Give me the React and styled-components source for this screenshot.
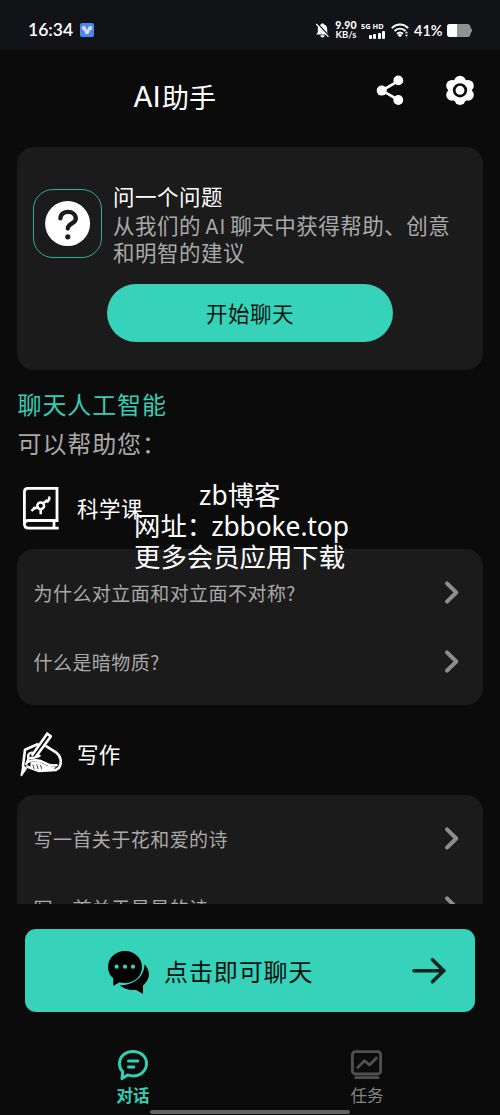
import React from "react";
import styled, { createGlobalStyle } from "styled-components";

const Global = createGlobalStyle`
  * { box-sizing: border-box; }
  body {
    margin: 0;
    background: #0b0b0b;
    color: #fff;
    font-family: "Noto Sans CJK SC", "Noto Sans", sans-serif;
    font-kerning: none;
    overflow: hidden;
  }
  svg { display: block; flex: none; }
`;

const Screen = styled.div`
  position: relative;
  width: 500px;
  height: 1115px;
  display: flex;
  flex-direction: column;
  background: #0b0b0b;
  overflow: hidden;
`;

const Text = styled.span`
  display: block;
  white-space: nowrap;
  font-size: ${(p) => p.$size}px;
  letter-spacing: ${(p) => p.$gap || 0}px;
  line-height: ${(p) => p.$line || 30}px;
  color: ${(p) => p.$color || "#fff"};
  font-weight: ${(p) => p.$weight || 400};
`;

const StatusBar = styled.div`
  height: 50px;
  flex: none;
  display: flex;
  align-items: center;
  padding: 10px 28px 0 28px;
  background: #121317;
`;

const Clock = styled.span`
  width: 45px;
  font: 600 17.5px/20px Lato, sans-serif;
  margin-right: 7px;
  white-space: nowrap;
`;

const StatusRight = styled.div`
  margin-left: auto;
  display: flex;
  align-items: center;
`;

const Speed = styled.div`
  width: 22px;
  margin: 0 4px 0 6px;
  font: 700 9.5px/9px Lato, sans-serif;
  text-align: center;
  white-space: nowrap;
  b { display: block; font-size: 10.5px; letter-spacing: 0.2px; }
`;

const Signal = styled.div`
  width: 24px;
  margin-right: 6px;
  font: 700 7.4px/8px "Noto Sans", sans-serif;
  white-space: nowrap;
`;

const Bars = styled.div`
  display: flex;
  align-items: flex-end;
  justify-content: flex-end;
  gap: 1.4px;
  height: 9px;
`;

const Bar = styled.i`
  width: 3px;
  height: ${(p) => p.$h}px;
  border-radius: 1px;
  background: #fff;
`;

const Percent = styled.span`
  width: 29px;
  margin: 1px 4px 0 5px;
  font: 600 14.5px/20px Lato, sans-serif;
  white-space: nowrap;
`;

const Header = styled.header`
  height: 97px;
  flex: none;
  display: flex;
  padding: 25px 25px 0 133px;
`;

const Title = styled.h1`
  flex: 1;
  display: flex;
  margin: 7px 0 0;
  font-size: 27px;
  line-height: 30px;
  font-weight: 400;
`;

const TitleLatin = styled.span`
  width: 29px;
  font-family: Inter, sans-serif;
  font-size: 29px;
  letter-spacing: -0.3px;
`;

const Actions = styled.div`
  display: flex;
  gap: 41px;
`;

const Content = styled.main`
  height: 757px;
  flex: none;
  overflow: hidden;
  padding: 0 17px 0 16.5px;
`;

const HeroCard = styled.section`
  height: 223px;
  border-radius: 17px;
  background: #1b1b1b;
  padding: 34px 16px 28px 16.5px;
  display: flex;
  flex-direction: column;
  justify-content: space-between;
`;

const HeroTop = styled.div`
  display: flex;
  gap: 11px;
`;

const IconBox = styled.div`
  width: 69px;
  height: 69px;
  margin-top: 8px;
  flex: none;
  display: grid;
  place-items: center;
  border: 1.4px solid #30ae99;
  border-radius: 20px;
`;

const Description = styled(Text)`
  margin-top: 1px;
`;

const Latin = styled.span`
  padding: 0 4px 0 4px;
  font-family: Inter, sans-serif;
  font-size: 20px;
  line-height: 1;
  letter-spacing: 1px;
`;

const StartButton = styled.button`
  width: 286px;
  height: 58px;
  padding: 0;
  margin-left: 74px;
  border: 0;
  border-radius: 29px;
  background: #36d2b9;
  font-family: inherit;
  display: grid;
  place-items: center;
`;

const Intro = styled.div`
  padding: 15px 0 0 1px;
  height: 108px;
`;

const SectionHead = styled.div`
  display: flex;
  align-items: center;
  gap: 15px;
  height: ${(p) => p.$height}px;
  padding: ${(p) => p.$top || 0}px 0 ${(p) => p.$bottom || 0}px 3.5px;
`;

const List = styled.div`
  border-radius: 17px;
  background: #1b1b1b;
  padding: 9px 22px 8px 17px;
`;

const Row = styled.div`
  height: 69.5px;
  display: flex;
  align-items: center;
  justify-content: space-between;
`;

const Cta = styled.button`
  width: 450px;
  height: 83px;
  flex: none;
  margin: 25px 25px 0;
  border: 0;
  border-radius: 11px;
  background: #36d2b9;
  padding: 0 28px 0 82px;
  display: flex;
  align-items: center;
  font-family: inherit;
`;

const CtaLabel = styled(Text)`
  flex: 1;
  text-align: left;
  padding-left: 14px;
`;

const Tabs = styled.nav`
  display: flex;
  padding: 37px 16px 0;
`;

const Tab = styled.div`
  flex: 1;
  display: flex;
  flex-direction: column;
  align-items: center;
`;

const HomeBar = styled.div`
  position: absolute;
  left: 150px;
  bottom: 1px;
  width: 200px;
  height: 4px;
  border-radius: 2px;
  background: #626262;
`;

const Watermark = styled.div`
  position: absolute;
  left: 134px;
  top: 480px;
  width: 216px;
  font: 400 26.4px/31px "Noto Sans", "Noto Sans CJK SC", sans-serif;
  text-align: left;
  white-space: nowrap;
  pointer-events: none;
`;

const WatermarkName = styled.div`
  padding-left: 65px;
`;

const Site = styled.span`
  margin-left: -2px;
  letter-spacing: -0.1px;
`;

const Chevron = () => (
  <svg width="18" height="26" viewBox="0 0 18 26" fill="none" stroke="#8e8e8e" strokeWidth="4" strokeLinecap="round" strokeLinejoin="round">
    <path d="M4 3.3 13.3 12.5 4 21.7" />
  </svg>
);

const AppBadge = () => (
  <svg width="14" height="14" viewBox="0 0 14 14">
    <rect width="14" height="14" rx="2" fill="#4c87ed" />
    <path d="M3.8 5.3 7 9 10.3 5.3" stroke="#cfd7ff" strokeWidth="3" fill="none" />
    <circle cx="3.9" cy="5" r="2.1" fill="#f0cbdc" />
    <circle cx="10.2" cy="5" r="2.1" fill="#c4e6c5" />
    <circle cx="7" cy="9" r="2.2" fill="#d9dcff" />
  </svg>
);

const BellOff = () => (
  <svg width="13" height="15" viewBox="0 0 13 15">
    <path d="M6.5 .2a1.2 1.2 0 0 1 1.2 1c2.2.6 3.5 2.4 3.5 4.7v3.4l1.4 2.2H.4l1.4-2.2V5.9c0-2.3 1.3-4.1 3.5-4.7a1.2 1.2 0 0 1 1.2-1zM4.4 12.2h4.2a2.1 2.2 0 0 1-4.2 0z" fill="#fff" />
    <path d="M1.2 .3 13.6 13.4" stroke="#121317" strokeWidth="1.4" />
    <path d="M.2 1 12.5 13.9" stroke="#fff" strokeWidth="1.2" />
  </svg>
);

const Wifi = () => (
  <svg width="18" height="15" viewBox="0 0 18 15" fill="none" stroke="#fff" strokeWidth="1.9">
    <path d="M.8 5.2c4.7-4.9 11.7-4.9 16.4 0M3.5 8c3.2-3.2 7.8-3.2 11 0M6 10.7c1.9-1.6 4.1-1.6 6 0" />
    <path d="M6.5 12Q9 10 11.2 12L9 14.3z" fill="#fff" stroke="none" />
    <path d="m15.5 8.3 1.5 2h-3zM15.5 13.7l1.5-2h-3z" fill="#fff" stroke="none" />
  </svg>
);

const Battery = () => (
  <svg width="25" height="13" viewBox="0 0 25 13">
    <path d="M3 0h18q2 0 2.4 2.5L24 4.4q1 .6 1 2.1t-1 2.1l-.6 1.9Q23 13 21 13H3q-3 0-3-3V3q0-3 3-3z" fill="#919195" />
    <path d="M3 0h7v13H3q-3 0-3-3V3q0-3 3-3z" fill="#fff" />
  </svg>
);

const Share = () => (
  <svg width="28" height="31" viewBox="0 0 28 31" fill="#fff">
    <path d="M22.5 5.8 6 15.6 22.5 25" fill="none" stroke="#fff" strokeWidth="2.6" />
    <circle cx="22.3" cy="5.4" r="4.9" />
    <circle cx="5.7" cy="15.6" r="5" />
    <circle cx="22.3" cy="25" r="4.9" />
  </svg>
);

const Gear = () => (
  <svg width="30" height="31" viewBox="0 0 30 31" fill="#fff">
    <circle cx="15" cy="15.3" r="11.8" />
    <circle cx="15" cy="6.4" r="5.7" />
    <circle cx="15" cy="24.2" r="5.7" />
    <circle cx="7" cy="10.7" r="5.8" />
    <circle cx="23" cy="10.7" r="5.8" />
    <circle cx="7" cy="19.9" r="5.8" />
    <circle cx="23" cy="19.9" r="5.8" />
    <circle cx="15" cy="15.3" r="5.8" stroke="#0b0b0b" strokeWidth="2.7" />
  </svg>
);

const Question = () => (
  <svg width="46" height="46" viewBox="0 0 46 46">
    <circle cx="22.6" cy="22.6" r="22.5" fill="#fff" />
    <path d="M15.4 17.4C15.4 8.6 30.8 8.5 30.8 17.8C30.8 22.6 22.8 22.3 22.8 27.6" fill="none" stroke="#1b1b1b" strokeWidth="4.3" strokeLinecap="round" />
    <circle cx="22.8" cy="35.8" r="2.6" fill="#1b1b1b" />
  </svg>
);

const Book = () => (
  <svg width="42" height="44" viewBox="0 0 42 44" fill="none" stroke="#fff" strokeWidth="2.8">
    <path d="M37 34.5V2.4H8Q4.4 2.4 4.4 6v32q0 4.2 4.5 4.2h29.8M4.4 38.5q0-4 4-4h30.1M34 34.5v7.7" />
    <circle cx="20.7" cy="19.8" r="3.4" strokeWidth="2.5" />
    <path d="m23.2 17.2 3.3-2.5 1.2.7 1.5-2v-2.8M18 21.7l-3 .2-3.6 3M20.7 23.5v4.8" strokeWidth="2.5" />
    <circle cx="27" cy="15" r="1.6" fill="#fff" stroke="none" />
    <circle cx="14.3" cy="22" r="1.6" fill="#fff" stroke="none" />
  </svg>
);

const Writing = () => (
  <svg width="42" height="45" viewBox="0 0 42 45" fill="none" stroke="#fff" strokeWidth="2.6" strokeLinecap="round" strokeLinejoin="round">
    <path d="M17.5 12.3 5 17.7 3 34.2M26.5 14.3l9.8 6.4c4.8 3.4 5.8 10 2.7 15l-3 2.2-17.5 1-11-4.2" />
    <path d="M27.2 1.7 30.8 4.4 16.4 24" />
    <path d="M27.2 1.7 12.4 22.8" />
    <path d="M12 20.6c-3.6-.2-4.3 3.6-3.6 5.6l4.9-.4 6.2-2M8.6 26.5l-2.4 5.7M8.6 29.8c4-2.3 11-2 15.4.8 4.4 2.6 8 3.2 12.6 2.6" strokeWidth="2.4" />
    <path d="M10.5 30.5q6-2 10.5.2l6 3 9 1-3 3-17 1.4-5.5-3.6z" fill="#fff" stroke="none" />
    <path d="m13 33 1.2 3.8M16.8 32.7l1.2 4M20.6 33.3l1 3.2" stroke="#0b0b0b" strokeWidth=".8" />
    <path d="m3 34.4 3.2 1.8-4.8 7z" fill="#fff" strokeWidth="1.8" />
  </svg>
);

const ChatBubbles = () => (
  <svg width="43" height="50" viewBox="0 -5 43 50">
    <path d="M37.5 13.3C43.2 19 44 28 36 34.5V43l-7.2-4.3c-6.3.8-12-1.2-16-4.3C24.5 34.4 37.2 28 37.5 13.3z" />
    <path d="M18 0c9.5 0 17 7 17 16S27.5 32 18 32c-2 0-3.8-.2-5.5-.7L6.3 35v-7.7C2.8 24.5 1 20.5 1 16 1 7 8.5 0 18 0z" />
    <g fill="#36d2b9"><circle cx="9.6" cy="15.7" r="2.1" /><circle cx="18" cy="15.7" r="2.1" /><circle cx="26" cy="15.7" r="2.1" /></g>
  </svg>
);

const Arrow = () => (
  <svg width="36" height="28" viewBox="0 0 36 28" fill="none" stroke="#06251f" strokeWidth="3.6" strokeLinecap="round" strokeLinejoin="round">
    <path d="M3 13.7h30M21.5 2.7 32.7 13.7 21.5 24.7" />
  </svg>
);

const TalkIcon = () => (
  <svg width="32" height="32" viewBox="0 0 32 32" fill="none" stroke="#36cdb5" strokeWidth="3" strokeLinecap="round" strokeLinejoin="round">
    <path d="M16 2.5c7.7 0 13.5 5 13.5 12S23.7 26.9 16 26.9c-2 0-3.8-.4-5.4-1L5 29.6l.8-6.8C3.5 20.5 2.5 18 2.5 14.7 2.5 7.5 8.3 2.5 16 2.5z" />
    <path d="M11.5 12h9.3M11.5 18h5.3" />
  </svg>
);

const TaskIcon = () => (
  <svg width="32" height="32" viewBox="0 0 32 32" fill="none" stroke="#505050" strokeWidth="2.8" strokeLinecap="round" strokeLinejoin="round">
    <rect x="1.4" y="2.7" width="28.2" height="22.3" rx="3" />
    <path d="m6.7 18.5 6.8-6.8 5 4.2 7-7M4.7 28.7h22.4" />
  </svg>
);

const Questions = ({ items }) => (
  <List>
    {items.map((item) => (
      <Row key={item}>
        <Text $size={19} $gap={0.45} $color="#a9a9a9">{item}</Text>
        <Chevron />
      </Row>
    ))}
  </List>
);

export default function App() {
  return (
    <Screen>
      <Global />
      <StatusBar>
        <Clock>16:34</Clock>
        <AppBadge />
        <StatusRight>
          <BellOff />
          <Speed><b>9.90</b>KB/s</Speed>
          <Signal>
            5G HD
            <Bars><Bar $h={4} /><Bar $h={5} /><Bar $h={6} /><Bar $h={7.5} /></Bars>
          </Signal>
          <Wifi />
          <Percent>41%</Percent>
          <Battery />
        </StatusRight>
      </StatusBar>
      <Header>
        <Title><TitleLatin>AI</TitleLatin>助手</Title>
        <Actions><Share /><Gear /></Actions>
      </Header>
      <Content>
        <HeroCard>
          <HeroTop>
            <IconBox><Question /></IconBox>
            <div>
              <Text $size={21.5} $gap={0.5}>问一个问题</Text>
              <Description $size={21.5} $gap={0.5} $line={26.5} $color="#a9a9a9">
                从我们的<Latin>AI</Latin>聊天中获得帮助、创意<br />和明智的建议
              </Description>
            </div>
          </HeroTop>
          <StartButton><Text $size={21.5} $gap={0.5} $color="#061512">开始聊天</Text></StartButton>
        </HeroCard>
        <Intro>
          <Text $size={24} $gap={0.9} $line={38.5} $color="#36cdb5">聊天人工智能</Text>
          <Text $size={24} $gap={0.9} $line={38.5} $color="#a9a9a9">可以帮助您：</Text>
        </Intro>
        <SectionHead $height={71} $bottom={12}>
          <Book /><Text $size={21.5} $gap={0.5}>科学课</Text>
        </SectionHead>
        <Questions items={["为什么对立面和对立面不对称?", "什么是暗物质?"]} />
        <SectionHead $height={90} $top={8}>
          <Writing /><Text $size={21.5} $gap={0.3}>写作</Text>
        </SectionHead>
        <Questions items={["写一首关于花和爱的诗", "写一首关于星星的诗"]} />
      </Content>
      <Cta>
        <ChatBubbles />
        <CtaLabel $size={24} $gap={0.9} $color="#06110f">点击即可聊天</CtaLabel>
        <Arrow />
      </Cta>
      <Tabs>
        <Tab><TalkIcon /><Text $size={16.5} $line={29} $color="#36cdb5" $weight={700}>对话</Text></Tab>
        <Tab><TaskIcon /><Text $size={16.5} $line={29} $color="#858585">任务</Text></Tab>
      </Tabs>
      <HomeBar />
      <Watermark>
        <WatermarkName>zb博客</WatermarkName>
        <div>网址：<Site>zbboke.top</Site></div>
        <div>更多会员应用下载</div>
      </Watermark>
    </Screen>
  );
}
